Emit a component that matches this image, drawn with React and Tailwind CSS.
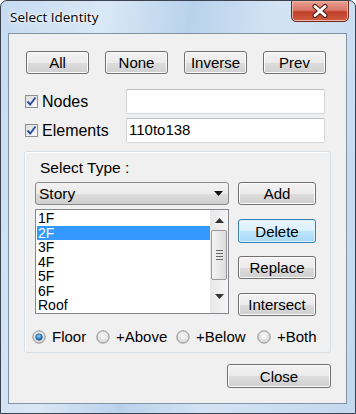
import React, { useState } from 'react';

const font = { fontFamily: '"Liberation Sans", Arial, sans-serif' };

const WinButton = ({ children, className = '', focused = false }) => (
    <button
        type="button"
        className={`flex items-center justify-center rounded-[3px] border text-[15px] leading-none text-black ${
            focused
                ? 'border-[#3c7fb1] bg-[linear-gradient(#eaf6fd_0%,#d9f0fc_50%,#bee6fd_51%,#a7d9f5_100%)] shadow-[inset_0_0_0_1px_#d8f1fd]'
                : 'border-[#707070] bg-[linear-gradient(#f2f2f2_0%,#ebebeb_50%,#dddddd_51%,#cfcfcf_100%)] shadow-[inset_0_0_0_1px_#fcfcfc]'
        } ${className}`}
    >
        {children}
    </button>
);

const CheckBox = ({ checked }) => (
    <span className="flex h-[13px] w-[13px] items-center justify-center border border-[#8e8f8f] bg-[linear-gradient(135deg,#dcdcdc,#fafafa)]">
        {checked && (
            <svg width="11" height="11" viewBox="0 0 11 11">
                <path d="M1.5 5.5 L4.2 8.5 L9.5 1.5" fill="none" stroke="#2b4c9a" strokeWidth="1.9" />
            </svg>
        )}
    </span>
);

const Radio = ({ checked }) => (
    <svg width="14" height="14" viewBox="0 0 14 14">
        <defs>
            <radialGradient id="rg" cx="50%" cy="40%" r="60%">
                <stop offset="0%" stopColor="#ffffff" />
                <stop offset="100%" stopColor="#cfcfcf" />
            </radialGradient>
            <radialGradient id="rb" cx="45%" cy="35%" r="60%">
                <stop offset="0%" stopColor="#8fd4ff" />
                <stop offset="100%" stopColor="#0b5ea8" />
            </radialGradient>
        </defs>
        <circle cx="7" cy="7" r="6.2" fill="url(#rg)" stroke="#8a8a8a" strokeWidth="0.9" />
        {checked && <circle cx="7" cy="7" r="3.3" fill="url(#rb)" stroke="#1c4f7a" strokeWidth="0.6" />}
    </svg>
);

const stories = ['1F', '2F', '3F', '4F', '5F', '6F', 'Roof'];

const levels = [
    { label: 'Floor', w: 'w-[64px]' },
    { label: '+Above', w: 'w-[80px]' },
    { label: '+Below', w: 'w-[81px]' },
    { label: '+Both', w: 'w-[64px]' },
];

const App = () => {
    const [selected, setSelected] = useState(1);
    const [level, setLevel] = useState('Floor');

    return (
        <div
            className="relative flex h-[414px] w-[356px] flex-col overflow-hidden rounded-t-[7px] border border-[#3a4350] bg-[linear-gradient(100deg,#c6dbf1_0%,#dae8f6_25%,#b9d2ec_45%,#d3e3f4_65%,#c3d8ef_100%)] pb-[9px] pl-[7px] pr-[8px] pt-[32px]"
            style={font}
        >
            <div className="absolute left-[9px] top-[6px] text-[13.5px] text-black [text-shadow:0_0_6px_#ffffff,0_0_3px_#ffffff]" style={{ fontFamily: '"Open Sans", "Noto Sans", sans-serif' }}>
                Select Identity
            </div>
            <div className="absolute right-[6px] top-[-1px] flex h-[22px] w-[58px] items-center justify-center rounded-b-[5px] border border-[#6e2a1e] bg-[linear-gradient(#e9a08f_0%,#d9786a_45%,#c2402b_55%,#cd5c3f_100%)] shadow-[inset_0_0_0_1px_#f0b3a4]">
                <svg width="18" height="14" viewBox="0 0 18 14">
                    <path d="M4 2.5 L14 11.5 M14 2.5 L4 11.5" stroke="#4a1a12" strokeWidth="5" strokeLinecap="round" />
                    <path d="M4 2.5 L14 11.5 M14 2.5 L4 11.5" stroke="#ffffff" strokeWidth="3" strokeLinecap="round" />
                </svg>
            </div>

            <div className="flex flex-1 flex-col border border-[#8293a6] bg-[#f0f0f0]">
                <div className="mt-[17px] flex gap-[16px] pl-[17px]">
                    <WinButton className="h-[23px] w-[63px]">All</WinButton>
                    <WinButton className="h-[23px] w-[63px]">None</WinButton>
                    <WinButton className="h-[23px] w-[63px]">Inverse</WinButton>
                    <WinButton className="h-[23px] w-[63px]">Prev</WinButton>
                </div>

                <div className="mt-[15px] flex h-[25px] items-center pl-[16px]">
                    <CheckBox checked />
                    <span className="ml-[4px] w-[84px] text-[16px] text-black">Nodes</span>
                    <div className="h-[25px] w-[199px] rounded-[2px] border border-[#d2d7dc] border-t-[#b9bec5] bg-white" />
                </div>
                <div className="mt-[4px] flex h-[25px] items-center pl-[16px]">
                    <CheckBox checked />
                    <span className="ml-[4px] w-[84px] text-[16px] text-black">Elements</span>
                    <div className="flex h-[25px] w-[199px] items-center rounded-[2px] border border-[#d2d7dc] border-t-[#b9bec5] bg-white pl-[2px] text-[15px] text-black">
                        110to138
                    </div>
                </div>

                <div className="ml-[15px] mt-[8px] flex h-[202px] w-[307px] flex-col rounded-[3px] border border-[#d5dfe5] pl-[10px] shadow-[inset_1px_1px_0_#ffffff]">
                    <div className="ml-[5px] mt-[7px] h-[18px] text-[15.5px] leading-[18px] text-black">Select Type :</div>
                    <div className="mt-[5px] flex gap-[9px]">
                        <div className="flex w-[194px] flex-col">
                            <div className="flex h-[23px] items-center justify-between rounded-[3px] border border-[#8a8a8a] bg-[linear-gradient(#f2f2f2_0%,#ebebeb_50%,#dddddd_51%,#cfcfcf_100%)] pl-[3px] pr-[5px] text-[15.5px] text-black">
                                <span>Story</span>
                                <svg width="9" height="5" viewBox="0 0 9 5">
                                    <path d="M0 0 H9 L4.5 5 Z" fill="#111" />
                                </svg>
                            </div>
                            <div className="mt-[4px] flex h-[105px] border border-[#828790] bg-white">
                                <div className="flex-1 pl-[1px] pt-[1px]">
                                    {stories.map((s, i) => (
                                        <div
                                            key={s}
                                            onClick={() => setSelected(i)}
                                            className={`h-[14.5px] pl-[1px] text-[14px] leading-[14.5px] ${
                                                i === selected ? 'bg-[#3399ff] text-white' : 'text-black'
                                            }`}
                                        >
                                            {s}
                                        </div>
                                    ))}
                                </div>
                                <div className="flex w-[18px] flex-col items-center bg-[linear-gradient(90deg,#e8e8e8,#f5f5f5)]">
                                    <div className="flex h-[20px] items-center justify-center">
                                        <svg width="9" height="5" viewBox="0 0 9 5">
                                            <path d="M0 5 L4.5 0 L9 5 Z" fill="#333" />
                                        </svg>
                                    </div>
                                    <div className="flex h-[50px] w-[16px] flex-col items-center justify-center gap-[2px] rounded-[2px] border border-[#9a9a9a] bg-[linear-gradient(90deg,#f4f4f4,#dcdcdc)]">
                                        <div className="h-px w-[7px] bg-[#666]" />
                                        <div className="h-px w-[7px] bg-[#666]" />
                                        <div className="h-px w-[7px] bg-[#666]" />
                                        <div className="h-px w-[7px] bg-[#666]" />
                                    </div>
                                    <div className="flex flex-1 items-center justify-center">
                                        <svg width="9" height="5" viewBox="0 0 9 5">
                                            <path d="M0 0 H9 L4.5 5 Z" fill="#333" />
                                        </svg>
                                    </div>
                                </div>
                            </div>
                        </div>
                        <div className="flex w-[78px] flex-col">
                            <WinButton className="h-[23px]">Add</WinButton>
                            <WinButton focused className="mt-[14px] h-[24px]">Delete</WinButton>
                            <WinButton className="mt-[13px] h-[23px]">Replace</WinButton>
                            <WinButton className="mt-[14px] h-[23px]">Intersect</WinButton>
                        </div>
                    </div>
                    <div className="-ml-[3px] mt-[10px] flex items-center text-[15px] text-black">
                        {levels.map(({ label, w }) => (
                            <label key={label} onClick={() => setLevel(label)} className={`flex items-center ${w}`}>
                                <Radio checked={level === label} />
                                <span className="ml-[6px]">{label}</span>
                            </label>
                        ))}
                    </div>
                </div>

                <div className="mt-[11px] flex justify-end pr-[15px]">
                    <WinButton className="h-[24px] w-[104px]">Close</WinButton>
                </div>
            </div>
        </div>
    );
};

export default App;
